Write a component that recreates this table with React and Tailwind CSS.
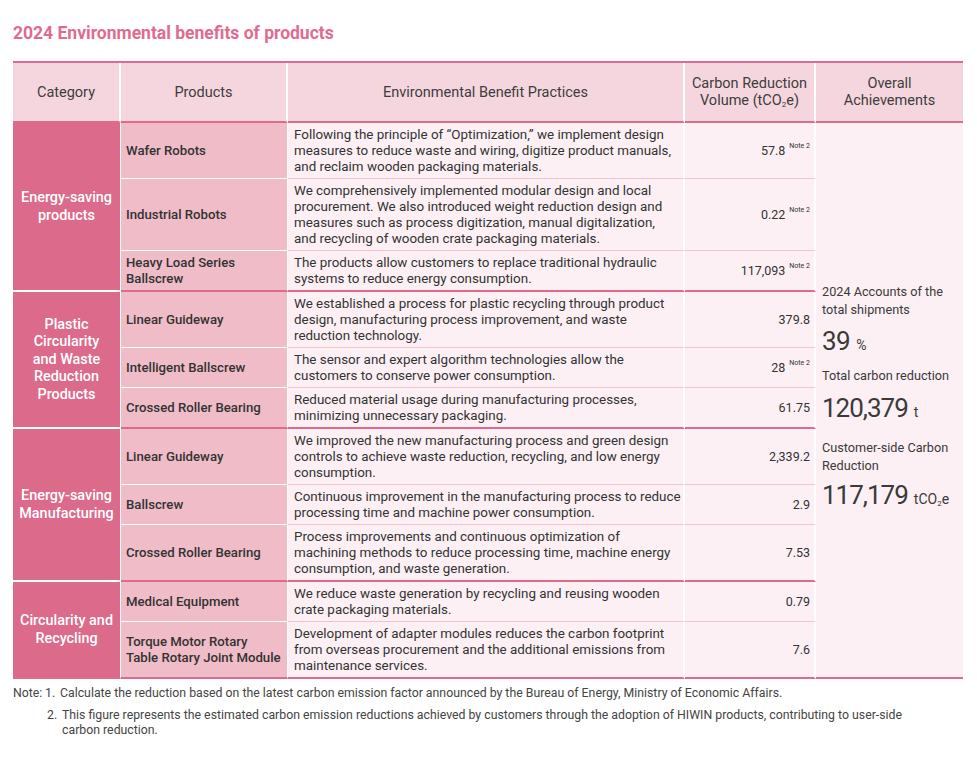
import React from "react";

const groups = [
  {
    cat: ["Energy-saving", "products"],
    rows: [
      {
        p: ["Wafer Robots"],
        t: [
          "Following the principle of \u201cOptimization,\u201d we implement design",
          "measures to reduce waste and wiring, digitize product manuals,",
          "and reclaim wooden packaging materials.",
        ],
        v: "57.8",
        note: true,
      },
      {
        p: ["Industrial Robots"],
        t: [
          "We comprehensively implemented modular design and local",
          "procurement. We also introduced weight reduction design and",
          "measures such as process digitization, manual digitalization,",
          "and recycling of wooden crate packaging materials.",
        ],
        v: "0.22",
        note: true,
      },
      {
        p: ["Heavy Load Series", "Ballscrew"],
        t: [
          "The products allow customers to replace traditional hydraulic",
          "systems to reduce energy consumption.",
        ],
        v: "117,093",
        note: true,
      },
    ],
  },
  {
    cat: ["Plastic", "Circularity", "and Waste", "Reduction", "Products"],
    rows: [
      {
        p: ["Linear Guideway"],
        t: [
          "We established a process for plastic recycling through product",
          "design, manufacturing process improvement, and waste",
          "reduction technology.",
        ],
        v: "379.8",
      },
      {
        p: ["Intelligent Ballscrew"],
        t: [
          "The sensor and expert algorithm technologies allow the",
          "customers to conserve power consumption.",
        ],
        v: "28",
        note: true,
      },
      {
        p: ["Crossed Roller Bearing"],
        t: [
          "Reduced material usage during manufacturing processes,",
          "minimizing unnecessary packaging.",
        ],
        v: "61.75",
      },
    ],
  },
  {
    cat: ["Energy-saving", "Manufacturing"],
    rows: [
      {
        p: ["Linear Guideway"],
        t: [
          "We improved the new manufacturing process and green design",
          "controls to achieve waste reduction, recycling, and low energy",
          "consumption.",
        ],
        v: "2,339.2",
      },
      {
        p: ["Ballscrew"],
        t: [
          "Continuous improvement in the manufacturing process to reduce",
          "processing time and machine power consumption.",
        ],
        v: "2.9",
      },
      {
        p: ["Crossed Roller Bearing"],
        t: [
          "Process improvements and continuous optimization of",
          "machining methods to reduce processing time, machine energy",
          "consumption, and waste generation.",
        ],
        v: "7.53",
      },
    ],
  },
  {
    cat: ["Circularity and", "Recycling"],
    rows: [
      {
        p: ["Medical Equipment"],
        t: [
          "We reduce waste generation by recycling and reusing wooden",
          "crate packaging materials.",
        ],
        v: "0.79",
      },
      {
        p: ["Torque Motor Rotary", "Table Rotary Joint Module"],
        t: [
          "Development of adapter modules reduces the carbon footprint",
          "from overseas procurement and the additional emissions from",
          "maintenance services.",
        ],
        v: "7.6",
      },
    ],
  },
];

const rowSpanCls = { 2: "row-span-2", 3: "row-span-3" };

function Lines({ lines }) {
  return lines.map((l, i) => (
    <div key={i} className="whitespace-nowrap">
      {l}
    </div>
  ));
}

function Overall() {
  return (
    <div className="row-span-11 bg-[#fcf0f4] border-b-2 border-[#dc6b8d] flex flex-col justify-center pl-[6px] pb-[6px] text-[12.7px] leading-[18px] text-[#3a3a3a]">
      <div>2024 Accounts of the</div>
      <div>total shipments</div>
      <div className="mt-[6px] flex items-baseline">
        <span className="text-[26px] leading-[32px] tracking-[-0.5px]">39</span>
        <span className="ml-[6px] text-[14px]">%</span>
      </div>
      <div className="mt-[10px]">Total carbon reduction</div>
      <div className="mt-[6px] flex items-baseline">
        <span className="text-[26px] leading-[34px] tracking-[-1px]">120,379</span>
        <span className="ml-[6px] text-[14px]">t</span>
      </div>
      <div className="mt-[14px]">Customer-side Carbon</div>
      <div>Reduction</div>
      <div className="mt-[3px] flex items-baseline">
        <span className="text-[26px] leading-[34px] tracking-[-1px]">117,179</span>
        <span className="ml-[6px] text-[14px]">
          tCO<sub className="text-[8px]">2</sub>e
        </span>
      </div>
    </div>
  );
}

const headCls =
  "h-[60px] bg-[#f5d6df] border-b-2 border-b-[#dc6b8d] flex flex-col items-center justify-center text-center text-[14.5px] leading-[17px] text-[#3d3d3d]";

export default function App() {
  const font = { fontFamily: "Roboto, 'Liberation Sans', sans-serif" };
  let first = true;
  return (
    <div className="w-[977px] min-h-[766px] bg-white pl-[13px] pt-[23px]" style={font}>
      <div className="text-[17.5px] leading-[20px] font-bold text-[#df6b8f] whitespace-nowrap">
        2024 Environmental benefits of products
      </div>
      <div className="mt-[18px] w-[950px] border-t-2 border-[#dc6b8d] grid grid-cols-[108px_167px_397px_131px_147px] text-[#3a3a3a]">
        <div className={`${headCls} border-r-2 border-r-white`}>Category</div>
        <div className={`${headCls} border-r-2 border-r-white`}>Products</div>
        <div className={`${headCls} border-r-2 border-r-white`}>Environmental Benefit Practices</div>
        <div className={`${headCls} border-r-2 border-r-white`}>
          <div>Carbon Reduction</div>
          <div>
            Volume (tCO<sub className="text-[8px]">2</sub>e)
          </div>
        </div>
        <div className={headCls}>
          <div>Overall</div>
          <div>Achievements</div>
        </div>

        {groups.map((g, gi) => {
          const lastGroup = gi === groups.length - 1;
          return g.rows.map((r, ri) => {
            const lastRow = ri === g.rows.length - 1;
            const cells = [];
            if (ri === 0) {
              cells.push(
                <div
                  key={`c${gi}`}
                  className={`${rowSpanCls[g.rows.length]} bg-[#db6a8b] border-r border-r-white border-b-2 ${
                    lastGroup ? "border-b-[#dc6b8d]" : "border-b-white"
                  } flex flex-col items-center justify-center text-center text-white font-medium text-[14.4px] leading-[17.5px]`}
                >
                  <Lines lines={g.cat} />
                </div>
              );
            }
            const bLight = lastRow ? "border-b-2 border-b-[#dc6b8d]" : "border-b border-b-white";
            const bPale = lastRow ? "border-b-2 border-b-[#dc6b8d]" : "border-b border-b-[#f1c2cf]";
            cells.push(
              <div
                key={`p${gi}${ri}`}
                className={`bg-[#efbcc8] border-r border-r-white ${bLight} flex flex-col justify-center pl-[5px] font-medium text-[13.2px] leading-[16px] text-[#333]`}
              >
                <Lines lines={r.p} />
              </div>
            );
            cells.push(
              <div
                key={`t${gi}${ri}`}
                className={`bg-[#fcf0f4] border-r-2 border-r-white ${bPale} pl-[6px] pt-[4px] pb-[3px] text-[13.4px] leading-[16px] text-[#333]`}
              >
                <Lines lines={r.t} />
              </div>
            );
            cells.push(
              <div
                key={`v${gi}${ri}`}
                className={`bg-[#fcf0f4] border-r-2 border-r-white ${bPale} flex items-center justify-end pr-[4px] text-[12.5px] leading-[16px] text-[#333]`}
              >
                <span>{r.v}</span>
                {r.note && (
                  <span className="ml-[4px] text-[7px] leading-[7px] self-center -translate-y-[4px]">Note 2</span>
                )}
              </div>
            );
            if (first) {
              first = false;
              cells.push(<Overall key="overall" />);
            }
            return cells;
          });
        })}
      </div>
      <div className="mt-[7px] text-[12.3px] leading-[15px] text-[#444]">
        <div className="flex whitespace-nowrap">
          <span className="w-[32px] shrink-0">Note:</span>
          <span className="w-[15px] shrink-0">1.</span>
          <span>
            Calculate the reduction based on the latest carbon emission factor announced by the Bureau of Energy,
            Ministry of Economic Affairs.
          </span>
        </div>
        <div className="flex mt-[7px] pl-[34px] whitespace-nowrap">
          <span className="w-[15px] shrink-0">2.</span>
          <span>
            <div>
              This figure represents the estimated carbon emission reductions achieved by customers through the
              adoption of HIWIN products, contributing to user-side
            </div>
            <div>carbon reduction.</div>
          </span>
        </div>
      </div>
    </div>
  );
}
